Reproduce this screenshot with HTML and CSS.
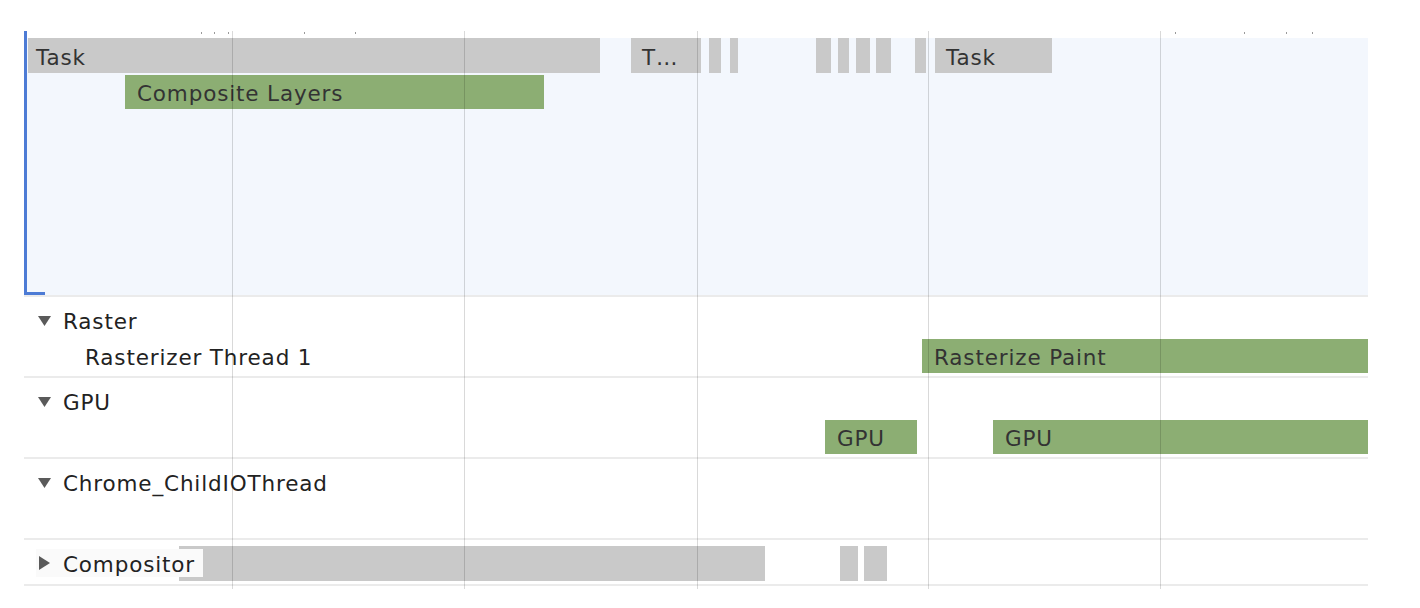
FILE: index.html
```html
<!DOCTYPE html>
<html>
<head>
<meta charset="utf-8">
<link rel="stylesheet" href="styles.css">
</head>
<body>
<div class="timeline">
  <div class="ticks">
    <i style="left:177px"></i><i style="left:190px"></i><i style="left:204px"></i><i style="left:280px"></i><i style="left:331px"></i>
    <i style="left:1151px"></i><i style="left:1220px"></i><i style="left:1262px"></i><i style="left:1288px"></i>
  </div>

  <section class="track main">
    <div class="selection"></div>
    <div class="bracket"></div>
    <div class="bar task clipped" style="left:4px;width:572px">Task</div>
    <div class="bar task" style="left:607px;width:70px">T…</div>
    <div class="bar task" style="left:685px;width:12px"></div>
    <div class="bar task" style="left:706px;width:8px"></div>
    <div class="bar task" style="left:792px;width:15px"></div>
    <div class="bar task" style="left:814px;width:11px"></div>
    <div class="bar task" style="left:832px;width:14px"></div>
    <div class="bar task" style="left:852px;width:15px"></div>
    <div class="bar task" style="left:891px;width:11px"></div>
    <div class="bar task" style="left:911px;width:117px">Task</div>
    <div class="bar paint composite" style="left:101px;width:419px">Composite Layers</div>
  </section>

  <section class="group">
    <div class="group-header">
      <svg class="tri" width="13" height="10" viewBox="0 0 13 10"><path d="M0 0H13L6.5 10Z"/></svg>
      <span>Raster</span>
    </div>
    <div class="lane">
      <span class="lane-label">Rasterizer Thread 1</span>
      <div class="bar paint" style="left:898px;width:446px">Rasterize Paint</div>
    </div>
  </section>

  <section class="group">
    <div class="group-header">
      <svg class="tri" width="13" height="10" viewBox="0 0 13 10"><path d="M0 0H13L6.5 10Z"/></svg>
      <span>GPU</span>
    </div>
    <div class="lane">
      <div class="bar paint" style="left:801px;width:92px">GPU</div>
      <div class="bar paint" style="left:969px;width:375px">GPU</div>
    </div>
  </section>

  <section class="group">
    <div class="group-header">
      <svg class="tri" width="13" height="10" viewBox="0 0 13 10"><path d="M0 0H13L6.5 10Z"/></svg>
      <span>Chrome_ChildIOThread</span>
    </div>
    <div class="lane"></div>
  </section>

  <section class="group collapsed">
    <div class="bar task" style="left:155px;width:586px;top:6px"></div>
    <div class="bar task" style="left:816px;width:18px;top:6px"></div>
    <div class="bar task" style="left:840px;width:23px;top:6px"></div>
    <div class="collapsed-label">
      <svg class="tri-right" width="11" height="14" viewBox="0 0 11 14"><path d="M0 0V14L11 7Z"/></svg>
      <span>Compositor</span>
    </div>
  </section>

  <div class="gridlines">
    <i style="left:208px"></i><i style="left:440px"></i><i style="left:673px"></i><i style="left:904px"></i><i style="left:1136px"></i>
  </div>
</div>
</body>
</html>
```

FILE: styles.css
```css
* { box-sizing: border-box; }

html, body {
  margin: 0;
  padding: 0;
  background: #ffffff;
}

body {
  padding-top: 31px;
  font-family: "DejaVu Sans", "Liberation Sans", sans-serif;
  font-size: 21.5px;
  letter-spacing: 0.85px;
  color: #2b2b2b;
}

.timeline {
  position: relative;
  margin-left: 24px;
  width: 1344px;
  padding-bottom: 3px;
}

.ticks i {
  position: absolute;
  top: 1px;
  width: 1px;
  height: 2px;
  background: #9a9a9a;
}

.track,
.group {
  position: relative;
  border-bottom: 2px solid #ebebeb;
}

.main {
  height: 266px;
}

.selection {
  position: absolute;
  left: 0;
  right: 0;
  top: 7px;
  bottom: 0;
  background: #f3f7fd;
}

.bracket {
  position: absolute;
  left: 0;
  top: 0;
  bottom: 0;
  width: 21px;
  border-left: 3px solid #4d7bd5;
  border-bottom: 3px solid #4d7bd5;
}

.bar {
  position: absolute;
  height: 35px;
  padding-top: 4px;
  line-height: 31px;
  padding-left: 11px;
  white-space: nowrap;
  overflow: hidden;
  color: #333333;
}

.bar:empty {
  padding: 0;
}

.bar.clipped {
  padding-left: 8px;
}

.main .task {
  top: 7px;
}

.task {
  background: #c9c9c9;
}

.paint {
  background: #8cae73;
  padding-left: 12px;
}

.composite {
  top: 44px;
  height: 34px;
  line-height: 30px;
}

.group {
  height: 81px;
}

.group-header {
  display: flex;
  align-items: center;
  gap: 12px;
  height: 42px;
  padding-top: 7px;
  padding-left: 14px;
  color: #222222;
}

.tri {
  fill: #5a5a5a;
  flex: none;
  margin-top: -1px;
}

.lane {
  position: relative;
  height: 34px;
}

.lane .bar {
  top: 0;
  height: 34px;
  line-height: 30px;
}

.lane-label {
  position: absolute;
  left: 61px;
  top: 2px;
  line-height: 34px;
  color: #222222;
}

.group.collapsed {
  height: 46px;
}

.collapsed-label {
  position: absolute;
  left: 12px;
  top: 9px;
  height: 28px;
  width: 167px;
  display: flex;
  align-items: center;
  gap: 13px;
  padding-left: 3px;
  padding-top: 3px;
  background: #fafafa;
  color: #222222;
}

.tri-right {
  fill: #5a5a5a;
  flex: none;
  margin-top: -3px;
}

.gridlines i {
  position: absolute;
  top: 0;
  bottom: 0;
  width: 1px;
  background: rgba(0, 0, 0, 0.15);
}
```
